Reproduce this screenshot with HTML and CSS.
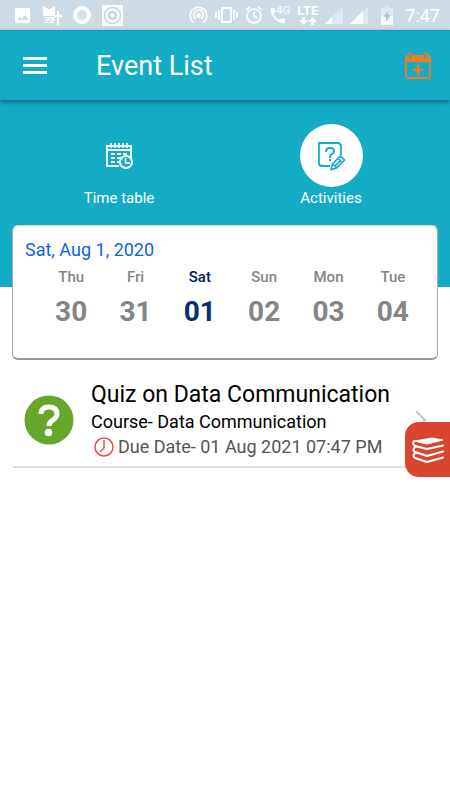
FILE: index.html
```html
<!DOCTYPE html>
<html lang="en">
<head>
    <meta charset="UTF-8">
    <meta name="viewport" content="width=device-width, initial-scale=1.0">
    <title>Event List</title>
    <link rel="stylesheet" href="styles.css">
</head>
<body>
    <div class="status-bar">
        <div class="status-left">
            <svg width="17" height="17" viewBox="0 0 17 17"><path fill="#fff" fill-rule="evenodd" d="M2 1h13q1 0 1 1v13q0 1-1 1H2q-1 0-1-1V2q0-1 1-1zM3 13h12l-4-5-3 4-2-2z"/></svg>
            <svg width="20" height="20" viewBox="0 0 20 20"><path fill="#fff" d="M1 1l5 3h2l5-3v10H1zM15 6h2v4h3v2h-3v8h-2v-8h-3v-2h3z"/><path stroke="#fff" stroke-width="1.2" fill="none" d="M2 12.500h3.500v5H2M2 15h3M7 17.500h3.500v-5H7V15h3M12 12v4"/></svg>
            <svg width="18" height="18" viewBox="0 0 18 18"><circle cx="9" cy="9" r="9" fill="#fff"/><circle cx="9" cy="9" r="5" fill="#d6e1ea"/></svg>
            <svg width="21" height="21" viewBox="0 0 21 21"><rect width="21" height="21" rx="1" fill="#fff"/><circle cx="10.500" cy="10.500" r="8" fill="none" stroke="#cddbe6" stroke-width="2"/><circle cx="10.500" cy="10.500" r="3.500" fill="none" stroke="#cddbe6" stroke-width="3"/></svg>
        </div>
        <div class="status-right">
            <svg width="19" height="18" viewBox="0 0 19 18" fill="none" stroke="#fff" stroke-width="1.600"><path d="M5 16.500a8.300 8.300 0 1 1 9 0M7 13a4.800 4.800 0 1 1 5 0"/><circle cx="9.500" cy="9.500" r="1.600" fill="#fff"/></svg>
            <svg width="23" height="16" viewBox="0 0 23 16" fill="none" stroke="#fff" stroke-width="2"><path d="M7 1h9v14H7zM4 3v10M19 3v10M1 5v6M22 5v6"/></svg>
            <svg width="18" height="18" viewBox="0 0 18 18" fill="none" stroke="#fff" stroke-width="1.700"><circle cx="9" cy="10" r="7"/><path d="M9 5.500V10l3.500 2M1 4l4-3M17 4l-4-3"/></svg>
            <div class="call">
                <svg width="16" height="17" viewBox="0 0 16 17"><path fill="#fff" d="M1 1h3.500l1 4-2 2q2 4 5.500 6l2-2 4 1v4q-5 1-10-4T1 1z"/></svg>
                <span class="net">4G</span>
            </div>
            <div class="lte">
                <span>LTE</span>
                <svg width="18" height="8" viewBox="0 0 18 8"><path fill="#fff" d="M3 0h3v3h3L4.500 8 0 3h3zM12 8h3V5h3l-4.500-5L9 5h3z"/></svg>
            </div>
            <svg width="18" height="18" viewBox="0 0 18 18"><path fill="#dee8ee" d="M18 0v18H0z"/><path fill="#fff" d="M7 11v7H0z"/></svg>
            <svg width="18" height="18" viewBox="0 0 18 18"><path fill="#dee8ee" d="M18 0v18H0z"/><path fill="#fff" d="M13 5v13H0z"/></svg>
            <svg class="battery" width="12" height="19" viewBox="0 0 12 19"><path fill="#dee8ee" d="M4 0h4v2h4v9H0V2h4z"/><path fill="#fff" d="M0 10h12v9H0z"/><path fill="#b4c6d3" d="M7 5l-5 6h3v5l5-7H7z"/></svg>
            <time>7:47</time>
        </div>
    </div>

    <header class="toolbar">
        <button class="icon-btn" aria-label="Menu">
            <svg width="24" height="18" viewBox="0 0 24 18"><path fill="#fff" d="M0 0h24v3H0zM0 7h24v3H0zM0 14h24v3H0z"/></svg>
        </button>
        <h1>Event List</h1>
        <button class="icon-btn" aria-label="Add event">
            <svg width="28" height="28" viewBox="0 0 28 28"><rect x="2" y="4" width="24" height="22" rx="2" fill="none" stroke="#f07c22" stroke-width="1.800"/><path fill="#f07c22" d="M2 3h24v7H2z"/><path d="M6.500 0v6M21.500 0v6" stroke="#14abc7" stroke-width="3"/><path d="M5 1v6h3V1zM20 1v6h3V1z" fill="#14abc7" stroke="#f07c22" stroke-width="1.200"/><path d="M14 13v10M9 18h10" stroke="#f07c22" stroke-width="2.500"/></svg>
        </button>
    </header>

    <nav class="tabs">
        <button class="tab">
            <span class="tab-icon">
                <svg width="28" height="28" viewBox="0 0 28 28" fill="none" stroke="#fff"><path stroke-width="1.800" d="M14 24H2V4h24v12M2 8h24"/><path stroke-width="1.600" d="M6 1v5M10 1v5M14 1v5M18 1v5M22 1v5"/><path stroke-width="2" stroke-dasharray="4 2" d="M6 12h17M6 16h10M6 20h9"/><circle cx="21" cy="20" r="6" fill="#14abc7" stroke-width="2"/><path stroke-width="1.600" d="M20.500 16v5H25"/></svg>
            </span>
            Time table
        </button>
        <button class="tab active">
            <span class="tab-icon">
                <svg width="30" height="30" viewBox="0 0 30 30" fill="none" stroke="#14abc7"><path stroke-width="1.800" d="M14 25H6q-3 0-3-3V2h18q4 0 4 4v8"/><path stroke-width="2" d="M10 11q0-4 4-4t4 3q0 2-2 3-2 1-2 4M14 18v2"/><path stroke-width="1.600" fill="#fff" d="M15 28.500l1.500-5.500 8-8 4 4-8 8zM17 23l3.500 3.500M22 17.500l4 4M19 25l5-5"/></svg>
            </span>
            Activities
        </button>
    </nav>

    <section class="calendar">
        <h2>Sat, Aug 1, 2020</h2>
        <div class="days">
            <button class="day">Thu<b>30</b></button>
            <button class="day">Fri<b>31</b></button>
            <button class="day selected">Sat<b>01</b></button>
            <button class="day">Sun<b>02</b></button>
            <button class="day">Mon<b>03</b></button>
            <button class="day">Tue<b>04</b></button>
        </div>
    </section>

    <main class="events">
        <a class="event" href="#">
            <svg class="quiz" width="50" height="50" viewBox="0 0 50 50"><circle cx="25" cy="25" r="24.500" fill="#65a62b"/><path d="M17 19q0-7 8-7t8 7q0 3-4 6-4 2-4 6" fill="none" stroke="#fff" stroke-width="5"/><circle cx="24.500" cy="37.500" r="3.800" fill="#fff"/></svg>
            <div class="info">
                <h3>Quiz on Data Communication</h3>
                <p class="course">Course- Data Communication</p>
                <p class="due">
                    <svg width="20" height="20" viewBox="0 0 20 20" fill="none" stroke="#e2523c" stroke-width="1.500"><circle cx="10" cy="10" r="9"/><path d="M10 3v8l-4 4"/></svg>
                    Due Date- 01 Aug 2021 07:47 PM
                </p>
            </div>
            <svg class="chevron" width="12" height="20" viewBox="0 0 12 20"><path d="M1 1l9 9-9 9" fill="none" stroke="#c4c4c4" stroke-width="2"/></svg>
        </a>
        <button class="library" aria-label="Library">
            <svg width="34" height="28" viewBox="0 0 34 28" fill="none" stroke="#fff" stroke-width="2" stroke-linejoin="round" stroke-linecap="round"><path fill="#fff" stroke-width="1" d="M4 5l17-3 11 2-16 4z"/><path d="M3 5q-2 3 1 5l12 3 16-3.500M4 11q-3 3 0 5l12 4 16-4.500M4 17q-3 3 0 5l12 4 16-4.500"/></svg>
        </button>
    </main>
</body>
</html>
```

FILE: styles.css
```css
* {
    box-sizing: border-box;
}
body {
    margin: 0;
    min-height: 100vh;
    background: #fff;
    font-family: Roboto, sans-serif;
}
button {
    border: 0;
    padding: 0;
    background: none;
    font-family: inherit;
}
h1, h2, h3, p {
    margin: 0;
    font-weight: 400;
}
svg {
    display: block;
    flex: none;
}

/* Status bar */
.status-bar {
    display: flex;
    justify-content: space-between;
    align-items: center;
    height: 30px;
    padding: 0 10px 0 14px;
    background: #cddbe6;
    color: #fff;
}
.status-left {
    display: flex;
    align-items: center;
    gap: 11px;
}
.status-right {
    display: flex;
    align-items: center;
    gap: 7px;
}
.call {
    display: flex;
    width: 20px;
}
.net {
    margin: -3px 0 0 -10px;
    font-size: 11px;
}
.lte {
    display: flex;
    flex-direction: column;
    align-items: center;
    font-size: 13px;
    font-weight: 700;
    line-height: 12px;
}
.battery {
    margin: 0 5px 0 6px;
}
time {
    font-size: 18px;
}

/* Toolbar */
.toolbar {
    position: relative;
    display: flex;
    align-items: center;
    height: 70px;
    padding: 0 18px 0 23px;
    background: #14abc7;
    border-top: 1px solid #009fc3;
    box-shadow: 0 2px 5px rgba(0, 0, 0, 0.4);
}
.toolbar h1 {
    flex: 1;
    margin-left: 49px;
    color: #fff;
    font-size: 27px;
}

/* Tabs */
.tabs {
    display: flex;
    height: 187px;
    padding: 24px 13px 0;
    background: #14abc7;
}
.tab {
    flex: 1;
    display: flex;
    flex-direction: column;
    align-items: center;
    align-self: flex-start;
    gap: 2px;
    color: #fff;
    font-size: 15px;
    line-height: 18px;
}
.tab-icon {
    display: flex;
    align-items: center;
    justify-content: center;
    width: 63px;
    height: 63px;
    border-radius: 50%;
}
.active .tab-icon {
    background: #fff;
}

/* Week card */
.calendar {
    position: relative;
    margin: -62px 12px 0;
    padding: 14px 12px 30px;
    background: #fff;
    border: 1px solid #aaa;
    border-top-color: #ddd;
    border-bottom: 2px solid #999;
    border-radius: 6px;
}
.calendar h2 {
    color: #0f62e6;
    font-size: 18px;
    line-height: 20px;
}
.days {
    display: grid;
    grid-template-columns: repeat(6, 1fr);
    margin: 8px 0 0 14px;
}
.day {
    color: #858585;
    font-size: 15px;
    font-weight: 500;
    line-height: 18px;
}
.day b {
    display: block;
    margin-top: 10px;
    font-size: 28px;
    line-height: 32px;
}
.selected {
    color: #001a66;
}
.selected b {
    color: #053070;
}

/* Event list */
.events {
    position: relative;
    padding: 0 13px;
}
.event {
    display: flex;
    align-items: center;
    padding: 20px 10px 6px 11px;
    border-bottom: 2px solid #ddd;
    color: #000;
    text-decoration: none;
}
.info {
    flex: 1;
    margin-left: 17px;
}
.info h3 {
    font-size: 23px;
    line-height: 30px;
}
.course {
    font-size: 18px;
    line-height: 24px;
}
.due {
    display: flex;
    align-items: center;
    gap: 4px;
    padding-left: 3px;
    color: #555;
    font-size: 18px;
    line-height: 26px;
}

/* Floating button on the right edge */
.library {
    position: absolute;
    top: 62px;
    right: 0;
    display: flex;
    align-items: center;
    justify-content: center;
    width: 45px;
    height: 55px;
    background: #d94630;
    border-radius: 14px 0 0 14px;
}
```
